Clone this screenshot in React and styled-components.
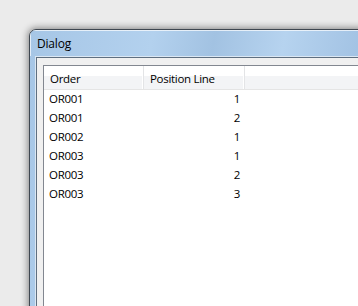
import React from "react";
import styled, { createGlobalStyle } from "styled-components";

const GlobalStyle = createGlobalStyle`
  html, body {
    margin: 0;
    padding: 0;
    background: #ebebeb;
    overflow: hidden;
  }
  body {
    font-family: "Open Sans", "Noto Sans", sans-serif;
    font-size: 11.5px;
    letter-spacing: -0.3px;
    color: #000;
  }
`;

const Desktop = styled.div`
  width: 358px;
  height: 306px;
  padding: 29px 0 0 29px;
  box-sizing: border-box;
  overflow: hidden;
`;

const Window = styled.div`
  width: 360px;
  height: 300px;
  display: flex;
  flex-direction: column;
  border: 1px solid #3f4750;
  border-top-left-radius: 7px;
  background: linear-gradient(
    100deg,
    #a6c6e6 0%,
    #b3d1ee 30%,
    #a2c2e2 45%,
    #b6d3ef 62%,
    #a3c3e4 80%,
    #aecdec 100%
  );
  box-shadow: 0 0 7px 1px rgba(0, 0, 0, 0.45);
  overflow: hidden;
`;

const TitleBar = styled.div`
  height: 26px;
  flex: none;
  display: flex;
  align-items: center;
  padding: 0 0 0 7px;
  box-sizing: border-box;
  font-size: 12px;
  letter-spacing: -0.2px;
  color: #000;
  box-shadow: inset 1px 1px 0 rgba(255, 255, 255, 0.7);
`;

const FrameBody = styled.div`
  flex: 1;
  display: flex;
  padding-left: 5px;
`;

const ClientEdge = styled.div`
  flex: 1;
  display: flex;
  border-top: 1px solid #dbe7f3;
  border-left: 1px solid #dbe7f3;
`;

const Client = styled.div`
  flex: 1;
  background: #f0f0f0;
  border-top: 1px solid #5f6f80;
  border-left: 1px solid #5f6f80;
  padding: 7px 0 0 6px;
`;

const Table = styled.div`
  height: 100%;
  background: #fff;
  border: 1px solid #828790;
  border-right: none;
  border-bottom: none;
`;

const HeaderRow = styled.div`
  display: flex;
  height: 23px;
  border-bottom: 1px solid #e5e5e5;
  background: linear-gradient(#ffffff 0%, #ffffff 45%, #f3f4f6 45%, #f3f4f6 100%);
`;

const HeaderCell = styled.div`
  width: ${({ $w }) => $w}px;
  flex: none;
  display: flex;
  align-items: center;
  padding: 1px 0 0 6px;
  box-sizing: border-box;
  border-right: 1px solid #e3e4e6;
  box-shadow: inset -1px 0 0 #ffffff;
`;

const HeaderFill = styled.div`
  flex: 1;
`;

const Row = styled.div`
  display: flex;
  height: 19px;
  align-items: center;
  padding-bottom: 2px;
  box-sizing: border-box;
`;

const Cell = styled.div`
  width: ${({ $w }) => $w}px;
  flex: none;
  box-sizing: border-box;
  padding: ${({ $right }) => ($right ? "0 5px 0 0" : "0 0 0 5px")};
  text-align: ${({ $right }) => ($right ? "right" : "left")};
`;

const rows = [
  ["OR001", 1],
  ["OR001", 2],
  ["OR002", 1],
  ["OR003", 1],
  ["OR003", 2],
  ["OR003", 3],
];

const App = () => {
  return (
    <>
      <GlobalStyle />
      <Desktop>
        <Window>
          <TitleBar>Dialog</TitleBar>
          <FrameBody>
            <ClientEdge>
              <Client>
                <Table>
                  <HeaderRow>
                    <HeaderCell $w={100}>Order</HeaderCell>
                    <HeaderCell $w={101}>Position Line</HeaderCell>
                    <HeaderFill />
                  </HeaderRow>
                  {rows.map(([order, line], idx) => (
                    <Row key={idx}>
                      <Cell $w={100}>{order}</Cell>
                      <Cell $w={101} $right>
                        {line}
                      </Cell>
                    </Row>
                  ))}
                </Table>
              </Client>
            </ClientEdge>
          </FrameBody>
        </Window>
      </Desktop>
    </>
  );
};

export default App;
